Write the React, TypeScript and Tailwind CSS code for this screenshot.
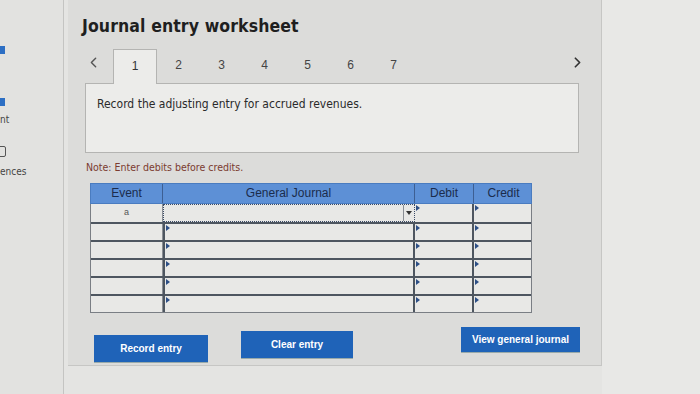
import { ChevronLeft, ChevronRight } from 'lucide-react'

const tabs = ['1', '2', '3', '4', '5', '6', '7']
const rows = ['a', '', '', '', '', '']

function Cell({ className, children }: { className?: string; children?: React.ReactNode }) {
  return <div className={'relative ' + (className ?? '')}>{children}</div>
}

// small dark flag marker in the corner of each input cell
function Marker() {
  return (
    <span className="absolute left-[1px] top-[1px] w-0 h-0 border-t-[3px] border-b-[3px] border-l-[4px] border-t-transparent border-b-transparent border-l-[#2d4f86]" />
  )
}

export default function App() {
  return (
    <div
      className="w-[700px] h-[394px] flex bg-[#e4e4e2] text-[#222] overflow-hidden"
      style={{ fontFamily: '"DejaVu Sans Condensed", "DejaVu Sans", Verdana, sans-serif' }}
    >
      {/* left sidebar fragment */}
      <div className="w-[64px] shrink-0 border-r border-[#c4c4c2] bg-[#e2e2e0] relative">
        <div className="absolute left-0 top-[46px] w-[5px] h-[8px] bg-[#2d6fc4]" />
        <div className="absolute left-0 top-[98px] w-[5px] h-[8px] bg-[#2d6fc4]" />
        <div className="absolute left-0 top-[112px] text-[10px] text-[#444]">nt</div>
        <div className="absolute -left-[3px] top-[146px] w-[9px] h-[11px] border border-[#555] rounded-[2px]" />
        <div className="absolute left-0 top-[164px] text-[10px] text-[#444]">ences</div>
      </div>

      {/* worksheet panel */}
      <div className="w-[534px] shrink-0 h-[366px] ml-[4px] bg-[#dcdcda] border-r border-b border-[#c6c6c4] pl-[14px] pr-[14px]">
        <h1 className="pt-[14px] text-[17.5px] font-bold leading-[24px] tracking-[0.1px] text-[#1f1f1f]">
          Journal entry worksheet
        </h1>

        {/* tab strip */}
        <div
          className="mt-[10px] flex items-end h-[35px] pl-[3px] relative w-[504px]"
          style={{ fontFamily: '"Liberation Sans", Arial, sans-serif' }}
        >
          <ChevronLeft size={17} strokeWidth={2} className="mb-[12px] mr-[11px] text-[#555]" />
          {tabs.map((t, i) =>
            i === 0 ? (
              <div
                key={t}
                className="w-[44px] h-[35px] pb-[2px] bg-[#ececea] border border-b-0 border-[#b4b4b2] flex items-center justify-center text-[12px] text-[#333] relative z-10 -mb-[1px]"
              >
                {t}
              </div>
            ) : (
              <div key={t} className="w-[43px] h-[35px] pb-[2px] flex items-center justify-center text-[12px] text-[#444]">
                {t}
              </div>
            )
          )}
          <div className="flex-1" />
          <ChevronRight size={17} strokeWidth={2.4} className="mb-[12px] text-[#333]" />
        </div>

        {/* instruction box */}
        <div className="ml-[3px] w-[494px] h-[70px] bg-[#ececea] border border-[#b4b4b2] px-[11px] pt-[11px] text-[12px] text-[#2a2a2a]">
          Record the adjusting entry for accrued revenues.
        </div>

        <p className="mt-[7px] ml-[4px] text-[10.5px] text-[#7b3b30]">Note: Enter debits before credits.</p>

        {/* journal table */}
        <div className="mt-[7px] ml-[8px] w-[442px] text-[10px]" style={{ fontFamily: '"Liberation Sans", Arial, sans-serif' }}>
          <div className="grid grid-cols-[72px_252px_59px_59px] h-[21px] bg-[#5d90d6] text-[12px] text-[#1b2c4c] border border-[#4a7cc0]">
            <div className="flex items-center justify-center border-r border-[#3d5f93]">Event</div>
            <div className="flex items-center justify-center border-r border-[#3d5f93]">General Journal</div>
            <div className="flex items-center justify-center border-r border-[#3d5f93]">Debit</div>
            <div className="flex items-center justify-center">Credit</div>
          </div>
          <div className="bg-[#e8e8e6] border-l border-r border-b border-[#7a7e84]">
            {rows.map((r, i) => (
              <div
                key={i}
                className={
                  'grid grid-cols-[72px_252px_59px_59px] ' +
                  (i > 0 ? 'h-[18px] border-t-2 border-[#4e5660]' : 'h-[18px]')
                }
              >
                <Cell className="flex items-center justify-center border-r border-[#8a8e94] text-[#555] text-[9px]">
                  {r}
                </Cell>
                {i === 0 ? (
                  <Cell className="border border-dotted border-[#3a4a66] flex justify-end">
                    <span className="w-[11px] h-full border-l border-[#8a8e94] flex items-center justify-center">
                      <span className="w-0 h-0 border-l-[3px] border-r-[3px] border-t-[4px] border-l-transparent border-r-transparent border-t-[#333]" />
                    </span>
                  </Cell>
                ) : (
                  <Cell className="border-r-2 border-l-2 border-[#4e5660]">
                    <Marker />
                  </Cell>
                )}
                <Cell className="border-r-2 border-[#4e5660]">
                  <Marker />
                </Cell>
                <Cell>
                  <Marker />
                </Cell>
              </div>
            ))}
          </div>
        </div>

        {/* actions */}
        <div
          className="mt-[18px] ml-[12px] flex items-start text-[10px] font-bold text-white"
          style={{ fontFamily: '"Liberation Sans", Arial, sans-serif' }}
        >
          <button className="w-[114px] h-[27px] mt-[4px] bg-[#1f63b8] shadow-[0_1px_0_#9aa]">Record entry</button>
          <button className="w-[112px] h-[27px] ml-[33px] bg-[#1f63b8] shadow-[0_1px_0_#9aa]">Clear entry</button>
          <button className="w-[119px] h-[25px] ml-[108px] -mt-[4px] bg-[#1f63b8] shadow-[0_1px_0_#9aa]">
            View general journal
          </button>
        </div>
      </div>

      {/* empty right area */}
      <div className="flex-1 bg-[#e8e8e6]" />
    </div>
  )
}
